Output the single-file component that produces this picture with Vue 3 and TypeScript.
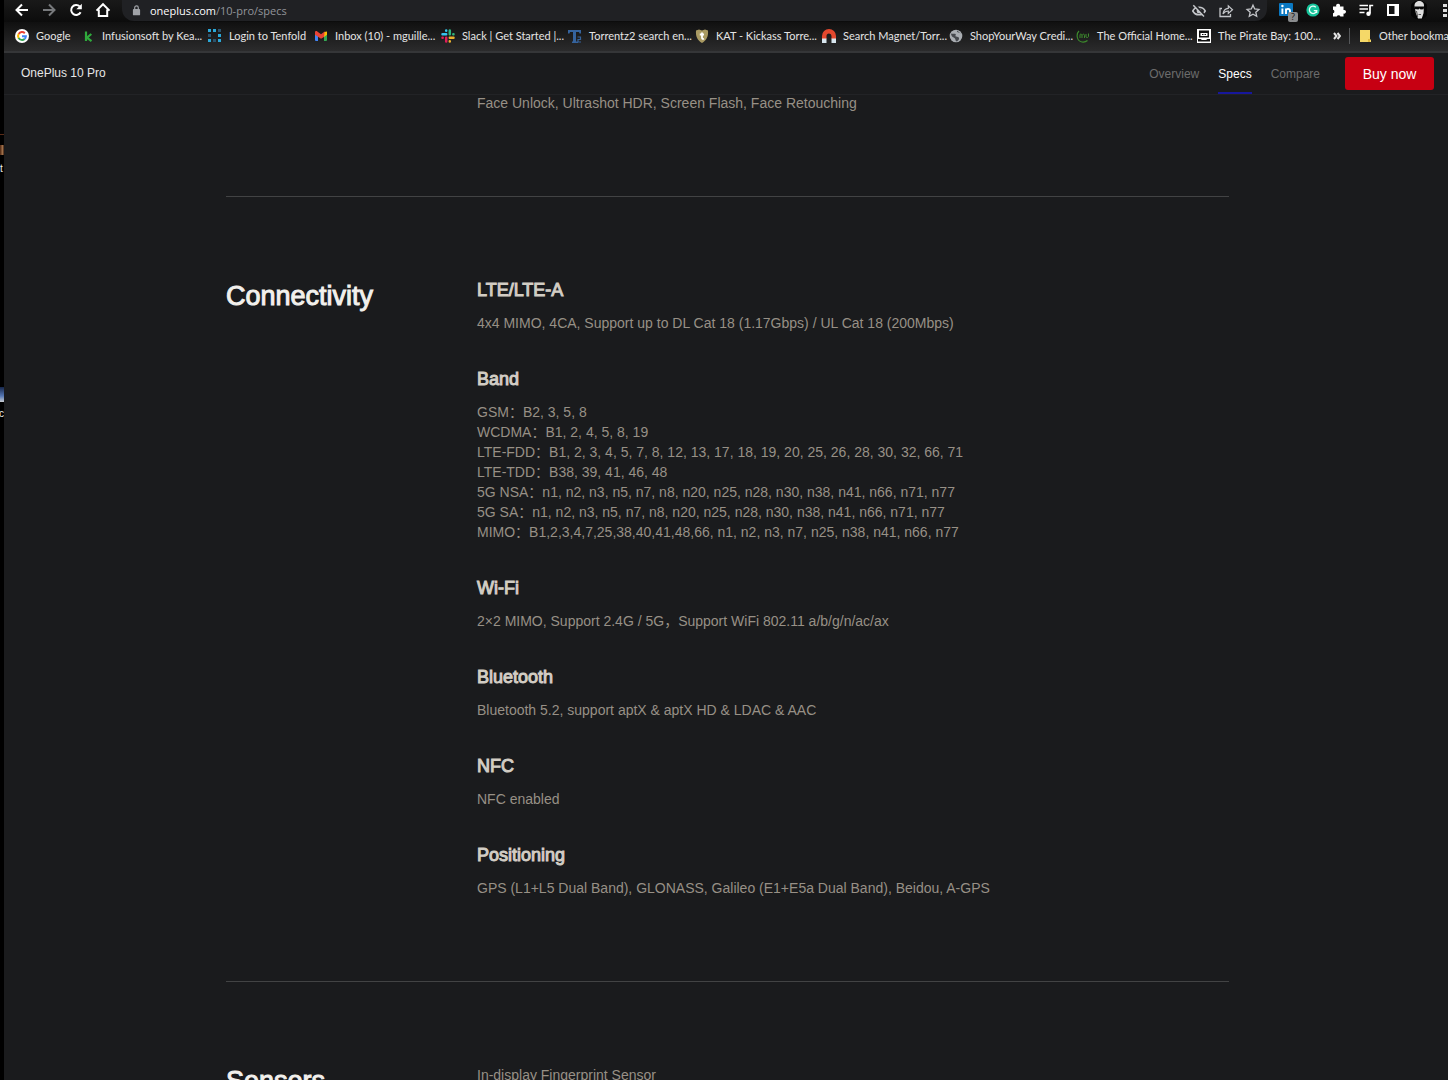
<script setup lang="ts">
interface Bookmark {
  label: string
  icon: string
  size?: 'short' | 'medium' | 'long'
}

interface Spec {
  title?: string
  lines: string[]
}

interface SpecSection {
  title: string
  specs: Spec[]
}

const bookmarks: Bookmark[] = [
  { label: 'Google', icon: 'google', size: 'short' },
  { label: 'Infusionsoft by Kea...', icon: 'keap' },
  { label: 'Login to Tenfold', icon: 'tenfold', size: 'medium' },
  { label: 'Inbox (10) - mguille...', icon: 'gmail' },
  { label: 'Slack | Get Started |...', icon: 'slack' },
  { label: 'Torrentz2 search en...', icon: 'torrentz' },
  { label: 'KAT - Kickass Torre...', icon: 'kat' },
  { label: 'Search Magnet/Torr...', icon: 'magnet' },
  { label: 'ShopYourWay Credi...', icon: 'globe' },
  { label: 'The Official Home...', icon: 'myth', size: 'long' },
  { label: 'The Pirate Bay: 100...', icon: 'pirate' },
]

const sections: SpecSection[] = [
  {
    title: '',
    specs: [{ lines: ['Face Unlock, Ultrashot HDR, Screen Flash, Face Retouching'] }],
  },
  {
    title: 'Connectivity',
    specs: [
      {
        title: 'LTE/LTE-A',
        lines: ['4x4 MIMO, 4CA, Support up to DL Cat 18 (1.17Gbps) / UL Cat 18 (200Mbps)'],
      },
      {
        title: 'Band',
        lines: [
          'GSM：B2, 3, 5, 8',
          'WCDMA：B1, 2, 4, 5, 8, 19',
          'LTE-FDD：B1, 2, 3, 4, 5, 7, 8, 12, 13, 17, 18, 19, 20, 25, 26, 28, 30, 32, 66, 71',
          'LTE-TDD：B38, 39, 41, 46, 48',
          '5G NSA：n1, n2, n3, n5, n7, n8, n20, n25, n28, n30, n38, n41, n66, n71, n77',
          '5G SA：n1, n2, n3, n5, n7, n8, n20, n25, n28, n30, n38, n41, n66, n71, n77',
          'MIMO：B1,2,3,4,7,25,38,40,41,48,66, n1, n2, n3, n7, n25, n38, n41, n66, n77',
        ],
      },
      { title: 'Wi-Fi', lines: ['2×2 MIMO, Support 2.4G / 5G，Support WiFi 802.11 a/b/g/n/ac/ax'] },
      { title: 'Bluetooth', lines: ['Bluetooth 5.2, support aptX & aptX HD & LDAC & AAC'] },
      { title: 'NFC', lines: ['NFC enabled'] },
      {
        title: 'Positioning',
        lines: ['GPS (L1+L5 Dual Band), GLONASS, Galileo (E1+E5a Dual Band), Beidou, A-GPS'],
      },
    ],
  },
  {
    title: 'Sensors',
    specs: [{ lines: ['In-display Fingerprint Sensor'] }],
  },
]
</script>

<template>
  <div class="screen">
    <aside class="desktop">
      <span class="shortcut shortcut-line"></span>
      <span class="shortcut shortcut-game"></span>
      <span class="shortcut shortcut-label first">t</span>
      <span class="shortcut shortcut-photo"></span>
      <span class="shortcut shortcut-label second">c</span>
    </aside>

    <div class="browser">
      <header class="toolbar">
        <div class="history">
          <button type="button" aria-label="Back">
            <svg viewBox="0 0 16 16"><path d="M14 8H3M8 2.5 2.5 8 8 13.5" class="line" /></svg>
          </button>
          <button type="button" aria-label="Forward" class="dim">
            <svg viewBox="0 0 16 16"><path d="M2 8h11M8 2.5 13.5 8 8 13.5" class="line" /></svg>
          </button>
          <button type="button" aria-label="Reload">
            <svg viewBox="0 0 16 16">
              <path d="M12.6 10.3A5 5 0 1 1 11.7 4.4" class="line" />
              <path d="M13.8 1.8v5.5H8.3z" fill="currentColor" />
            </svg>
          </button>
          <button type="button" aria-label="Home">
            <svg viewBox="0 0 16 16"><path d="M1.5 8.6 8 2.2l6.500 6.400M3.800 7.500V14h8.400V7.500" class="line" /></svg>
          </button>
        </div>

        <div class="address">
          <svg class="lock" viewBox="0 0 10 12">
            <rect x="1" y="4.500" width="8" height="7" rx="1" fill="#a0a3a8" />
            <path d="M3 5V3a2 2 0 0 1 4 0v2" fill="none" stroke="#a0a3a8" stroke-width="1.300" />
          </svg>
          <a href="#" class="url">oneplus.com<span>/10-pro/specs</span></a>
          <div class="address-actions">
            <button type="button" aria-label="Tracking blocked">
              <svg viewBox="0 0 16 16">
                <path d="M1.800 8C4.500 3 11.500 3 14.200 8 11.500 13 4.500 13 1.800 8z" fill="none" stroke="currentColor" stroke-width="1.600" />
                <circle cx="8" cy="8" r="2.400" fill="currentColor" />
                <path d="M3.500 1.500 14 12.500" stroke="#202124" stroke-width="2" />
                <path d="M2.300 2.300 13 13.500" stroke="currentColor" stroke-width="1.500" />
              </svg>
            </button>
            <button type="button" aria-label="Share">
              <svg viewBox="0 0 16 16">
                <path d="M4 5.500H2v8h10.500V11" fill="none" stroke="currentColor" stroke-width="1.300" />
                <path d="M5 11c.4-3.600 2.200-5.500 5.300-5.700V2.800L14.500 6.700l-4.200 3.800V8C8 8 6.400 8.900 5 11z" fill="none" stroke="currentColor" stroke-width="1.200" />
              </svg>
            </button>
            <button type="button" aria-label="Bookmark this page">
              <svg viewBox="0 0 16 16">
                <path d="m8 2.200 1.700 3.800 4.200.4-3.100 2.800.9 4.100L8 11.200l-3.700 2.100.9-4.100-3.100-2.800 4.200-.4z" fill="none" stroke="currentColor" stroke-width="1.300" />
              </svg>
            </button>
          </div>
        </div>

        <div class="extensions">
          <button type="button" aria-label="LinkedIn extension" class="badged">
            <svg viewBox="0 0 16 16">
              <rect x="1" y="1" width="14" height="13" rx="1" fill="#0a78c2" />
              <path d="M4.400 6.500V12M8 12V6.500M8 9c0-2.800 4-2.800 4 0v3" fill="none" stroke="#fff" stroke-width="1.900" />
              <circle cx="4.400" cy="4" r="1.200" fill="#fff" />
            </svg>
            <span class="badge">?</span>
          </button>
          <button type="button" aria-label="Grammarly">
            <svg viewBox="0 0 16 16">
              <circle cx="8" cy="8" r="6.600" fill="#15c39a" />
              <path d="M10.800 5.300A3.700 3.700 0 1 0 11.700 8.600H8.800M11.700 8.600v2.300" fill="none" stroke="#e8fff8" stroke-width="1.300" />
            </svg>
          </button>
          <button type="button" aria-label="Extensions">
            <svg viewBox="0 0 16 16">
              <path d="M2 4.500h3.300a2 2 0 1 1 3.600 0h3.600V8a1.900 1.900 0 1 1 0 3.600V14.500H9.400a1.900 1.900 0 0 0-3.600 0H2v-3.300a1.800 1.800 0 0 0 0-3.500z" fill="#fff" />
            </svg>
          </button>
          <button type="button" aria-label="Media controls">
            <svg viewBox="0 0 16 16">
              <path d="M1.500 3.500h8.500M1.500 7h8.500M1.500 10.500h5" stroke="#fff" stroke-width="1.700" />
              <path d="M12 11.500V3.500h3.200" fill="none" stroke="#fff" stroke-width="1.700" />
              <circle cx="10.500" cy="11.700" r="2.200" fill="#fff" />
            </svg>
          </button>
          <button type="button" aria-label="Side panel">
            <svg viewBox="0 0 16 16">
              <path d="M2 2h12v12H2zM4 4v8h5.500V4z" fill="#fff" fill-rule="evenodd" />
            </svg>
          </button>
          <button type="button" aria-label="Profile">
            <svg viewBox="0 0 16 20">
              <circle cx="8" cy="10" r="9.500" fill="#050505" />
              <path d="M3.500 5.500C3.500-.5 13-.5 13 5.500L12.600 13 10.800 18.500H7L4.800 13z" fill="#ddd" />
              <path d="M3.500 6.500h9.700l-.6 2.800-3 .3-1-1.200-1.200 1.200-3.400-.5z" fill="#080808" />
              <path d="M7.500 14.500h2.500M5.500 11l1.200 6" stroke="#555" />
            </svg>
          </button>
          <button type="button" aria-label="Menu">
            <svg viewBox="0 0 16 16">
              <rect x="5" y="2" width="4" height="3" fill="#ddd" />
              <rect x="5" y="7" width="4" height="3" fill="#ddd" />
              <rect x="5" y="12" width="4" height="3" fill="#ddd" />
            </svg>
          </button>
        </div>
      </header>

      <nav class="bookmarks" aria-label="Bookmarks">
        <a v-for="mark in bookmarks" :key="mark.label" href="#" class="bookmark" :class="mark.size">
          <svg viewBox="0 0 14 14">
            <template v-if="mark.icon === 'google'">
              <circle cx="7" cy="7" r="7" fill="#fff" />
              <path d="M3.700 5A3.900 3.900 0 0 1 9.800 4.200" class="g" stroke="#ea4335" />
              <path d="M3.700 4.900A3.900 3.900 0 0 0 3.700 9.100" class="g" stroke="#fbbc05" />
              <path d="M3.600 9A3.900 3.900 0 0 0 9.600 9.900" class="g" stroke="#34a853" />
              <path d="M7 7.200h3.900A3.900 3.900 0 0 1 9.500 10" class="g" stroke="#4285f4" />
            </template>
            <template v-else-if="mark.icon === 'keap'">
              <path d="M5 2.500v9.500M10.300 5 6 8.700l4.500 3.500" fill="none" stroke="#2faa3c" stroke-width="2.200" />
            </template>
            <template v-else-if="mark.icon === 'tenfold'">
              <g fill="#2ba8d8">
                <rect x="0" y="0" width="3" height="3" /><rect x="5" y="0" width="3" height="3" />
                <rect x="0" y="10" width="3" height="3" /><rect x="10" y="10" width="3" height="3" />
                <rect x="10" y="5" width="3" height="3" />
              </g>
              <g fill="#2b536c">
                <rect x="10" y="0" width="3" height="3" /><rect x="0" y="5" width="3" height="3" />
                <rect x="5" y="10" width="3" height="3" />
              </g>
            </template>
            <template v-else-if="mark.icon === 'gmail'">
              <path d="M1 3h3v9H2a1 1 0 0 1-1-1z" fill="#4285f4" />
              <path d="M10 3h3v8a1 1 0 0 1-1 1h-2z" fill="#34a853" />
              <path d="M10 3l3-.5v3.200l-3 2.300z" fill="#fbbc04" />
              <path d="M1 3.200C1 2 2.500 1.700 3.300 2.500L7 5.300l3.700-2.800L10 8 7 9.700 1 5.700z" fill="#ea4335" />
            </template>
            <template v-else-if="mark.icon === 'slack'">
              <g fill="none" stroke-width="2.500" stroke-linecap="round">
                <path d="M5.200 1.500v.2M1.500 5.200h3.700" stroke="#36c5f0" />
                <path d="M12.500 5.200h-.2M8.800 1.500v3.700" stroke="#2eb67d" />
                <path d="M8.800 12.500v-.2M12.500 8.800H8.800" stroke="#ecb22e" />
                <path d="M5.200 12.500V8.800M1.500 8.800h.2" stroke="#e01e5a" />
              </g>
            </template>
            <template v-else-if="mark.icon === 'torrentz'">
              <path d="M0 1h13v3.500h-1.500L11 3H8v9.500h2V14H4v-1.500h1V3H2L1.500 4.500H0z" fill="#35639d" />
              <path d="M9.500 8h3v2.500h-2.500V13h3" fill="none" stroke="#35639d" stroke-width="1.200" />
            </template>
            <template v-else-if="mark.icon === 'kat'">
              <path d="M1 1.500 4 .5l3 1 3-1 3 1c.5 6-1.500 10-6 12.500C2.500 11.500.5 7.500 1 1.500z" fill="#a99a62" />
              <path d="M7 3.500v5.200c0 1.300 1 1.500 2 1M4.800 5.500H9" fill="none" stroke="#fff" stroke-width="1.800" />
            </template>
            <template v-else-if="mark.icon === 'magnet'">
              <path d="M0 10V7a7 7 0 0 1 14 0v3h-4.500V7a2.500 2.500 0 0 0-5 0v3z" fill="#e3482e" />
              <path d="M0 9.500h4.500V14H0zM9.500 9.500H14V14H9.500z" fill="#d8e6ee" />
            </template>
            <template v-else-if="mark.icon === 'globe'">
              <circle cx="7" cy="7" r="6.300" fill="#a9adb2" />
              <path d="M2 4.500c2 1 3.500-.5 4.500.5s-1 2 .5 2.500 2.500 0 3 1.500-1 2.500-2 3.500C6 12 7 10 5.500 9S2.500 8 2 4.500zM8 1.500c-.5 1.500 1 2 2 2s1 1 2 1" fill="#46494e" />
            </template>
            <template v-else-if="mark.icon === 'myth'">
              <path d="M3 2C0 5 .5 12 6 13c2 .4 4-.3 5.500-1.500" fill="none" stroke="#3c8a2c" stroke-width="1.200" />
              <path d="M4 9V5.500c1-1 2 0 2 1V9M6 6.500c1-2 2.500-1.500 2.500 0V9M10 5v3c1 1 2 .5 2.500-.5V4.500" fill="none" stroke="#3c8a2c" />
            </template>
            <template v-else>
              <rect width="14" height="14" fill="#fff" />
              <path d="M2 1.500h10v7H2zM1 10h2.500l1.500 1h4l1.500-1H13v2.500H1z" fill="#111" />
              <path d="M3.500 4h7v3h-7z" fill="#fff" />
              <path d="M5 5.500h1.500M7.500 5.500H9" stroke="#111" />
            </template>
          </svg>
          <span>{{ mark.label }}</span>
        </a>
        <button type="button" class="more" aria-label="More bookmarks">
          <svg viewBox="0 0 8 8"><path d="m1 1 2.500 3L1 7M4.500 1 7 4 4.500 7" class="line" /></svg>
        </button>
        <a href="#" class="bookmark other">
          <svg viewBox="0 0 14 14"><path d="M2 1h10v9l1 1v2H2z" fill="#f5d868" /><path d="M10 10h2v3h-2z" fill="#e3b93d" /></svg>
          <span>Other bookmarks</span>
        </a>
      </nav>

      <div class="product-bar">
        <a href="#" class="product">OnePlus 10 Pro</a>
        <nav class="tabs" aria-label="Product">
          <a href="#">Overview</a>
          <a href="#" class="active" aria-current="page">Specs</a>
          <a href="#">Compare</a>
        </nav>
        <button type="button" class="buy">Buy now</button>
      </div>

      <main class="content">
        <section v-for="section in sections" :key="section.title" class="section">
          <h2>{{ section.title }}</h2>
          <div class="specs">
            <article v-for="spec in section.specs" :key="spec.lines[0]" class="spec">
              <h3 v-if="spec.title">{{ spec.title }}</h3>
              <p v-for="line in spec.lines" :key="line">{{ line }}</p>
            </article>
          </div>
        </section>
      </main>
    </div>
  </div>
</template>

<style>
body {
  background: #1a1b1d;
}
</style>

<style scoped>
.screen {
  display: flex;
  height: 100vh;
  overflow: hidden;
  background: #1a1b1d;
  font-family: "Liberation Sans", "Noto Sans CJK SC", sans-serif;
}

a {
  color: inherit;
  text-decoration: none;
}

button {
  padding: 0;
  border: 0;
  background: none;
  color: inherit;
  font: inherit;
}

svg {
  display: block;
}

.line {
  fill: none;
  stroke: currentColor;
  stroke-width: 2;
}

.desktop {
  position: relative;
  flex: none;
  width: 4px;
  overflow: hidden;
  background: #000;
}

.shortcut {
  position: absolute;
  left: 0;
}

.shortcut-line {
  top: 134px;
  width: 4px;
  height: 1px;
  background: #5a2c18;
}

.shortcut-game {
  top: 145px;
  width: 4px;
  height: 10px;
  background: linear-gradient(90deg, #4a2410, #a87850 70%, #2a1208);
}

.shortcut-photo {
  top: 387px;
  width: 4px;
  height: 15px;
  background: linear-gradient(#16264a, #5577b4 60%, #c8ccd0);
}

.shortcut-label {
  color: #eee;
  font-size: 10px;
  line-height: 12px;
}

.first {
  top: 163px;
}

.second {
  top: 408px;
  left: -1px;
}

.browser {
  display: flex;
  flex: 1;
  flex-direction: column;
  min-width: 0;
  overflow: hidden;
}

.toolbar {
  display: flex;
  flex: none;
  height: 22px;
  background: linear-gradient(#191919, #0c0c0c);
  color: #fff;
  font-family: "Open Sans", "Noto Sans", sans-serif;
}

.history {
  display: flex;
  justify-content: space-between;
  width: 97px;
  height: 20px;
  margin: 0 11px 0 10px;
}

.toolbar button {
  display: flex;
  align-items: center;
  width: 16px;
  height: 20px;
}

.toolbar button svg {
  width: 16px;
}

.toolbar .dim {
  color: #77797c;
}

.address {
  display: flex;
  flex: 1;
  align-items: center;
  height: 21px;
  padding: 0 6px 0 10px;
  box-sizing: border-box;
  border-radius: 0 0 12px 12px;
  background: #202124;
}

.lock {
  width: 9px;
  margin-right: 9px;
}

.url {
  flex: 1;
  font-size: 11px;
  line-height: 20px;
}

.url span {
  color: #92959a;
}

.address-actions {
  display: flex;
  gap: 11px;
  color: #c3c5c9;
}

.extensions {
  display: flex;
  flex: none;
  justify-content: space-between;
  width: 176px;
  height: 20px;
  margin: 0 -6px 0 11px;
}

.badged {
  position: relative;
}

.badge {
  position: absolute;
  right: -4px;
  bottom: -2px;
  width: 10px;
  height: 10px;
  border-radius: 2px;
  background: #8a8c8e;
  color: #111;
  font-size: 9px;
  line-height: 10px;
  text-align: center;
}

.bookmarks {
  display: flex;
  flex: none;
  align-items: center;
  height: 31px;
  padding: 0 0 1px 11px;
  box-sizing: border-box;
  border-bottom: 2px solid #353638;
  background: linear-gradient(#101010, #2b2b2c);
  color: #e4e4e4;
  font-family: Lato, "Open Sans", sans-serif;
  font-size: 11px;
}

.bookmark {
  display: flex;
  flex: 0 0 127px;
  align-items: center;
  gap: 7px;
  min-width: 0;
  line-height: 16px;
  white-space: nowrap;
}

.bookmark svg {
  flex: none;
  width: 14px;
  height: 14px;
}

.g {
  fill: none;
  stroke-width: 2;
}

.short {
  flex-basis: 66px;
}

.medium {
  flex-basis: 106px;
}

.long {
  flex-basis: 121px;
}

.more {
  flex: none;
  width: 8px;
  margin: 0 8px 0 9px;
}

.other {
  padding-left: 8px;
  border-left: 1px solid #55575a;
}

.product-bar {
  display: flex;
  flex: none;
  align-items: center;
  height: 42px;
  padding: 0 14px 0 17px;
  box-sizing: border-box;
  border-bottom: 1px solid #222326;
  color: #e6e6e6;
}

.product {
  font-size: 12px;
  line-height: 38px;
  padding-bottom: 2px;
}

.tabs {
  display: flex;
  gap: 19px;
  margin: 0 25px 0 auto;
  color: #6c6c6c;
  font-size: 12px;
  line-height: 35px;
}

.tabs a {
  padding-top: 4px;
  border-bottom: 2px solid transparent;
}

.tabs .active {
  border-color: #17179c;
  color: #fff;
}

.buy {
  width: 89px;
  height: 33px;
  border-radius: 3px;
  background: #c70012;
  color: #fff;
  font-size: 14px;
}

.content {
  padding: 0 219px 0 222px;
  margin-top: -2px;
}

.section {
  display: grid;
  grid-template-columns: 251px 1fr;
  padding: 80px 0 83px;
  border-top: 1px solid #424344;
}

.section:first-child {
  padding-top: 0;
  border-top: 0;
}

.section:last-child {
  padding-bottom: 0;
}

h2,
h3,
p {
  margin: 0;
}

h2 {
  color: #f2f0ec;
  font-size: 27px;
  font-weight: 400;
  line-height: 38px;
  -webkit-text-stroke: 1px currentColor;
}

.section:first-child h2 {
  line-height: 20px;
}

.specs {
  display: flex;
  flex-direction: column;
  gap: 33px;
}

h3 {
  margin-bottom: 10px;
  color: #d2cdc4;
  font-size: 18px;
  font-weight: 400;
  line-height: 26px;
  -webkit-text-stroke: 1px currentColor;
}

p {
  color: #979086;
  font-size: 14px;
  line-height: 20px;
}

.section:last-child p {
  padding-top: 3px;
}
</style>
